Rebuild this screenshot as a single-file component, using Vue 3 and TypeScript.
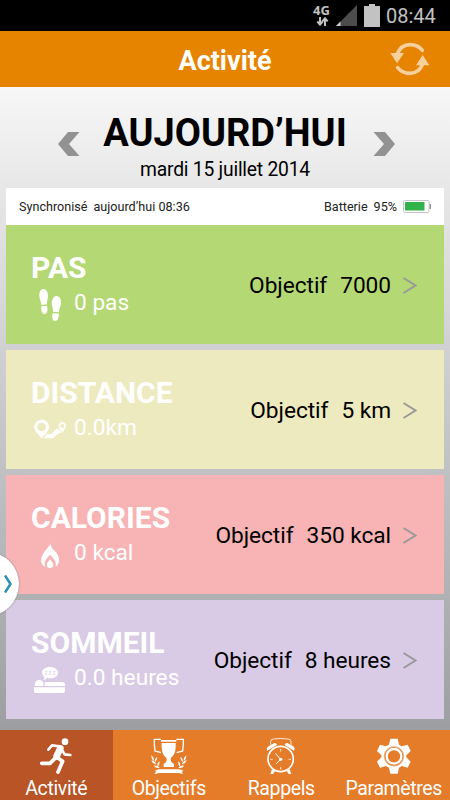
<script setup lang="ts">
type IconName = 'steps' | 'route' | 'flame' | 'bed'

interface Metric {
  icon: IconName
  title: string
  value: string
  goal: string
}

const metrics: Metric[] = [
  { icon: 'steps', title: 'PAS', value: '0 pas', goal: '7000' },
  { icon: 'route', title: 'DISTANCE', value: '0.0km', goal: '5 km' },
  { icon: 'flame', title: 'CALORIES', value: '0 kcal', goal: '350 kcal' },
  { icon: 'bed', title: 'SOMMEIL', value: '0.0 heures', goal: '8 heures' },
]

const tabs: { id: string; label: string }[] = [
  { id: 'run', label: 'Activité' },
  { id: 'cup', label: 'Objectifs' },
  { id: 'clock', label: 'Rappels' },
  { id: 'gear', label: 'Paramètres' },
]
const active = 'run'
</script>

<template>
  <div class="screen">
    <div class="status">
      <div class="network">
        <span>4G</span>
        <svg width="13" height="9" viewBox="0 0 13 9"><path d="M4 0v7M1.3 4.5 4 7.6l2.700-3.100M9 9V2M6.300 4.300 9 1.300l2.700 3" /></svg>
      </div>
      <svg class="signal" width="21" height="21" viewBox="0 0 21 21">
        <path fill="#4c4c4c" d="M21 0v21H0z" /><path fill="#d0d0d0" d="M4.500 16.500V21H0z" />
      </svg>
      <svg class="cell" width="16" height="23" viewBox="0 0 16 23"><path fill="#c2c2c2" d="M5 0h6v2h5v21H0V2h5z" /></svg>
      <span class="time">08:44</span>
    </div>

    <header class="header">
      <h1>Activité</h1>
      <svg class="refresh" width="40" height="40" viewBox="0 0 120 120">
        <path class="arc" d="M21 44C29 23 44 14 60 14c15 0 28 6 37 17M99 70c-8 21-23 30-39 30-15 0-28-6-37-17" />
        <path d="M1 39h41L21 70zM78 76h40L98 45z" />
      </svg>
    </header>

    <main class="main">
      <section class="day">
        <svg class="prev" width="22" height="24" viewBox="0 0 22 24"><path d="M10 0h11.500L11 12l10.500 12H10L0 12z" /></svg>
        <div class="date"><h2>AUJOURD’HUI</h2><p>mardi 15 juillet 2014</p></div>
        <svg class="next" width="22" height="24" viewBox="0 0 22 24"><path d="M12 0H.5L11 12 .5 24H12l10-12z" /></svg>
      </section>

      <div class="sync">
        <span class="sync-label">Synchronisé</span>
        <span class="sync-time">aujourd’hui 08:36</span>
        <span class="battery-label">Batterie</span>
        <span class="battery-level">95%</span>
        <svg width="28" height="13" viewBox="0 0 28 13">
          <rect x=".5" y=".5" width="25.500" height="12" rx="1" fill="#fff" stroke="#c6c6c6" />
          <path fill="#32b34a" d="M2 2h19.500v8.500H2z" /><path fill="#999" d="M26.500 4H28v5h-1.500z" />
        </svg>
      </div>

      <section class="cards">
        <article v-for="m in metrics" :key="m.title" class="card" :class="m.icon">
          <div class="result">
            <h3>{{ m.title }}</h3>
            <div class="value">
              <svg width="40" height="40" viewBox="0 0 120 120">
                <template v-if="m.icon === 'steps'">
                  <path d="M40 12c9 0 14 9 14 22 0 9-4 15-3 24l-17 2c0-9-5-15-6-26-1-13 4-22 12-22zM34 64l17-2c2 10 3 23-7 25-10 0-11-12-10-23z" />
                  <path d="M80 33c9 1 14 9 13 22-1 11-7 17-6 27l-18-2c1-10-4-16-4-25 1-14 7-22 15-22zM68 84l19 2c0 10-4 22-12 22-10-1-9-14-7-24z" />
                </template>
                <template v-else-if="m.icon === 'route'">
                  <path fill-rule="evenodd" d="M35 29c13 0 22 10 22 22 0 13-14 23-22 34C27 74 13 64 13 51c0-12 9-22 22-22zm0 9a13 13 0 1 0 0 26 13 13 0 0 0 0-26z" />
                  <path fill-rule="evenodd" d="M97 37c7 0 11 5 11 11 0 7-7 13-11 20-4-7-11-13-11-20 0-6 4-11 11-11zm0 5a6 6 0 1 0 0 12 6 6 0 0 0 0-12z" />
                  <path d="M50 73h13l15-15h9l7 10-10 3-14 14H41z" />
                </template>
                <template v-else-if="m.icon === 'flame'">
                  <path d="M63 23c-4 13-30 31-30 53 0 9 5 17 13 20-6-15 3-25 14-37 12 12 22 24 16 37 7-4 11-11 11-20 0-17-11-26-18-33-5-6-8-12-6-20z" />
                  <path d="M60 71c3 7 10 12 10 18 0 6-4 10-10 10s-10-4-10-10c0-6 7-11 10-18z" />
                </template>
                <template v-else>
                  <path d="M60 21c14 0 24 7 24 17S74 55 60 55c-3 0-6 0-9-1-3 4-8 6-12 5 3-2 5-4 5-8-5-3-8-7-8-13 0-10 10-17 24-17z" />
                  <path d="M15 78c-2-10 4-18 13-18s15 8 12 18zM44 78V69q0-3 4-3h48q9 0 9 8v4zM12 82h93v12q0 5-6 5H17q-5 0-5-5z" />
                  <path class="zs" d="M45 34h7l-7 9h7M57 34h7l-7 9h7M69 34h7l-7 9h7" />
                </template>
              </svg>
              <span>{{ m.value }}</span>
            </div>
          </div>
          <div class="goal">
            <span>Objectif</span><span>{{ m.goal }}</span>
            <svg width="14" height="17" viewBox="0 0 14 17"><path d="M.5 1 12.500 8.500.5 16" /></svg>
          </div>
        </article>
      </section>
      <button class="drawer" aria-label="Menu">
        <svg width="9" height="20" viewBox="0 0 9 20"><path d="M1 1.500 6.500 10 1 18.500" /></svg>
      </button>
    </main>

    <nav class="nav">
      <a v-for="t in tabs" :key="t.id" :class="{ active: t.id === active }">
        <svg width="48" height="40" viewBox="0 0 144 120">
          <g v-if="t.id === 'run'" class="runner">
            <circle cx="99" cy="20" r="10" />
            <path class="thin" d="M49 44 60 31 82 34M89 43l9 15 17 2" />
            <path class="thick" d="m85 40-11 23" />
            <path class="mid" d="m72 65 20 14-14 32M69 70 54 85H29" />
          </g>
          <g v-else-if="t.id === 'cup'">
            <path d="M48 15h46v5H48zM50 24h42c1 24-3 36-14 44-3 10 2 15 9 19v9H56v-9c7-4 11-9 8-19-11-8-15-20-14-44z" />
            <path class="line" d="M48 13H28v16l2 19 18 5M94 13h21v16l-2 19-18 5" />
            <path d="M41 103h60c7 0 10 4 14 3l-4 6 3 5c-5 0-8-3-13-3H43c-6 0-9 4-15 3l5-6-3-5c6 1 7-3 11-3z" />
            <path d="M19 61q10 7 7 16-8-6-7-16zM37 65q0 10-7 16-3-9 7-16zM19 76q13 3 14 12-11-2-14-12zM43 79q2 9-4 15-5-8 4-15zM26 92q13-2 18 6-10 4-18-6zM124 61q-10 7-7 16 8-6 7-16zM106 65q0 10 7 16 3-9-7-16zM125 76q-13 3-14 12 11-2 14-12zM100 79q-2 9 4 15 5-8-4-15zM118 92q-13-2-18 6 10 4 18-6z" />
          </g>
          <g v-else-if="t.id === 'clock'">
            <circle class="line face" cx="71" cy="72" r="38" />
            <path d="M31 47c-3-5-1-10 5-14l12-7c5-3 10-2 12 4zM83 30c3-6 7-7 12-4l13 7c5 4 6 9 3 14zM45 103l9 5-6 9h-8zM98 103l-9 5 6 9h8z" />
            <path class="line fine" d="M41 29V19q0-7 9-7 21-3 43 0 9 1 9 7v10M71 42v8M71 96v8M40 73h7M95 73h7" />
            <path class="line hands" d="M55 55 71 73 57 87" /><circle cx="71" cy="73" r="5" />
          </g>
          <g v-else>
            <path fill-rule="evenodd" d="M61 11h22l4 18 8 5 18-5 9 19-13 13v6l13 13-9 18-18-5-8 5-4 18H61l-4-18-9-5-18 5-9-18 13-13v-6L21 48l9-19 18 5 9-5zM72 36a28 28 0 1 0 0 56 28 28 0 0 0 0-56z" />
            <circle class="line gear-ring" cx="72" cy="64" r="22" />
            <circle class="gear-gap" cx="72" cy="64" r="29" />
          </g>
        </svg>
        <span>{{ t.label }}</span>
      </a>
    </nav>
  </div>
</template>

<style>
body {
  margin: 0;
}
</style>

<style scoped>
.screen {
  display: flex;
  flex-direction: column;
  width: 450px;
  height: 800px;
  overflow: hidden;
  font-family: Roboto, "Liberation Sans", sans-serif;
  color: #000;
}
h1, h2, h3, p { margin: 0; }
svg { display: block; flex: none; }
.status {
  display: flex;
  box-sizing: border-box;
  height: 31px;
  padding: 4px 14px 0 313px;
  background: #000;
  color: #c2c2c2;
}
.network {
  width: 17px;
  font: 700 13px/12px "Open Sans", sans-serif;
}
.network span { display: block; }
.network svg { margin: 1px 0 0 3px; fill: none; stroke: #c2c2c2; stroke-width: 2; }
.signal { margin: 1px 0 0 6px; }
.cell { margin-left: 7px; }
.time {
  margin-left: 6px;
  font-size: 20px;
  line-height: 24px;
}
.header {
  display: grid;
  grid-template-columns: 60px 1fr 60px;
  align-items: center;
  height: 56px;
  background: #e68400;
  color: #fff;
}
.header h1 {
  grid-column: 2;
  padding-top: 4px;
  text-align: center;
  font-size: 27px;
  font-weight: 700;
  line-height: 52px;
}
.refresh { margin-top: 2px; fill: #f8d09d; }
.arc { fill: none; stroke: #f8d09d; stroke-width: 11; stroke-linecap: round; }
.main {
  position: relative;
  flex: 1;
  padding: 0 6px;
  background: linear-gradient(#f7f7f7, #e5e5e6 18%, #d1d1d3 40%, #b0b1b2 79%, #9d9ea1);
}
.day {
  display: flex;
  justify-content: space-between;
  height: 101px;
  padding: 0 49px 0 52px;
}
.day svg { margin-top: 45px; fill: #929292; }
.date { padding-right: 3px; text-align: center; }
.date h2 {
  padding-top: 24px;
  font-size: 38px;
  font-weight: 700;
  line-height: 44px;
}
.date p {
  padding-top: 1px;
  font-size: 19.300px;
  letter-spacing: -0.22px;
  line-height: 28px;
}
.sync {
  display: flex;
  align-items: center;
  height: 37px;
  padding: 0 13px;
  background: #fff;
  color: #222;
  font-size: 12.600px;
}
.sync-time { margin-left: 6px; }
.battery-label { margin-left: auto; }
.battery-level { margin: 0 6px; }
.cards {
  display: grid;
  gap: 6px;
}
.card {
  display: flex;
  justify-content: space-between;
  height: 119px;
}
.steps { background: #b4d873; }
.route { background: #eeeabf; }
.flame { background: #f8b3b5; }
.bed { background: #d9cbe5; }
.result { padding-left: 24px; color: #fff; }
.card h3 {
  padding: 25px 0 0 1px;
  font-size: 30px;
  font-weight: 700;
  line-height: 35px;
}
.value {
  display: flex;
  font-size: 22.700px;
  line-height: 36px;
}
.value svg { fill: #fff; }
.value span { margin-left: 4px; }
.zs { fill: none; stroke: #d9cbe5; stroke-width: 2; }
.goal {
  display: flex;
  align-items: center;
  padding: 2px 27px 0 0;
  font-size: 22.700px;
  letter-spacing: -0.05px;
}
.goal span + span { margin-left: 13px; }
.goal svg { margin-left: 12px; fill: none; stroke: #999; stroke-width: 2; }
.drawer {
  position: absolute;
  top: 465px;
  left: -45px;
  display: flex;
  align-items: center;
  justify-content: flex-end;
  width: 64px;
  height: 64px;
  padding: 0 6px 0 0;
  border: 0;
  border-radius: 50%;
  background: #fff;
  box-shadow: 0 0 2px #777;
}
.drawer svg { fill: none; stroke: #2c8fb3; stroke-width: 2.500; }
.nav {
  display: grid;
  grid-template-columns: repeat(4, 1fr);
  height: 70px;
  background: #e47c29;
  color: #fff;
}
.nav a {
  display: flex;
  flex-direction: column;
  align-items: center;
  padding-top: 5px;
}
.nav .active { background: #b85426; }
.nav svg { fill: #fff; }
.nav span {
  font-size: 19.500px;
  letter-spacing: -0.38px;
  line-height: 27px;
  white-space: nowrap;
}
.runner path { fill: none; stroke: #fff; stroke-linecap: round; stroke-linejoin: round; }
.runner .thin { stroke-width: 8; }
.runner .mid { stroke-width: 11; }
.runner .thick { stroke-width: 20; }
.line { fill: none; stroke: #fff; stroke-width: 4; }
.face { stroke-width: 5; }
.fine { stroke-width: 2.500; }
.hands { stroke-width: 3; }
.gear-ring { stroke-width: 7; }
.gear-gap { fill: none; stroke: #e47c29; stroke-width: 2; }
</style>
